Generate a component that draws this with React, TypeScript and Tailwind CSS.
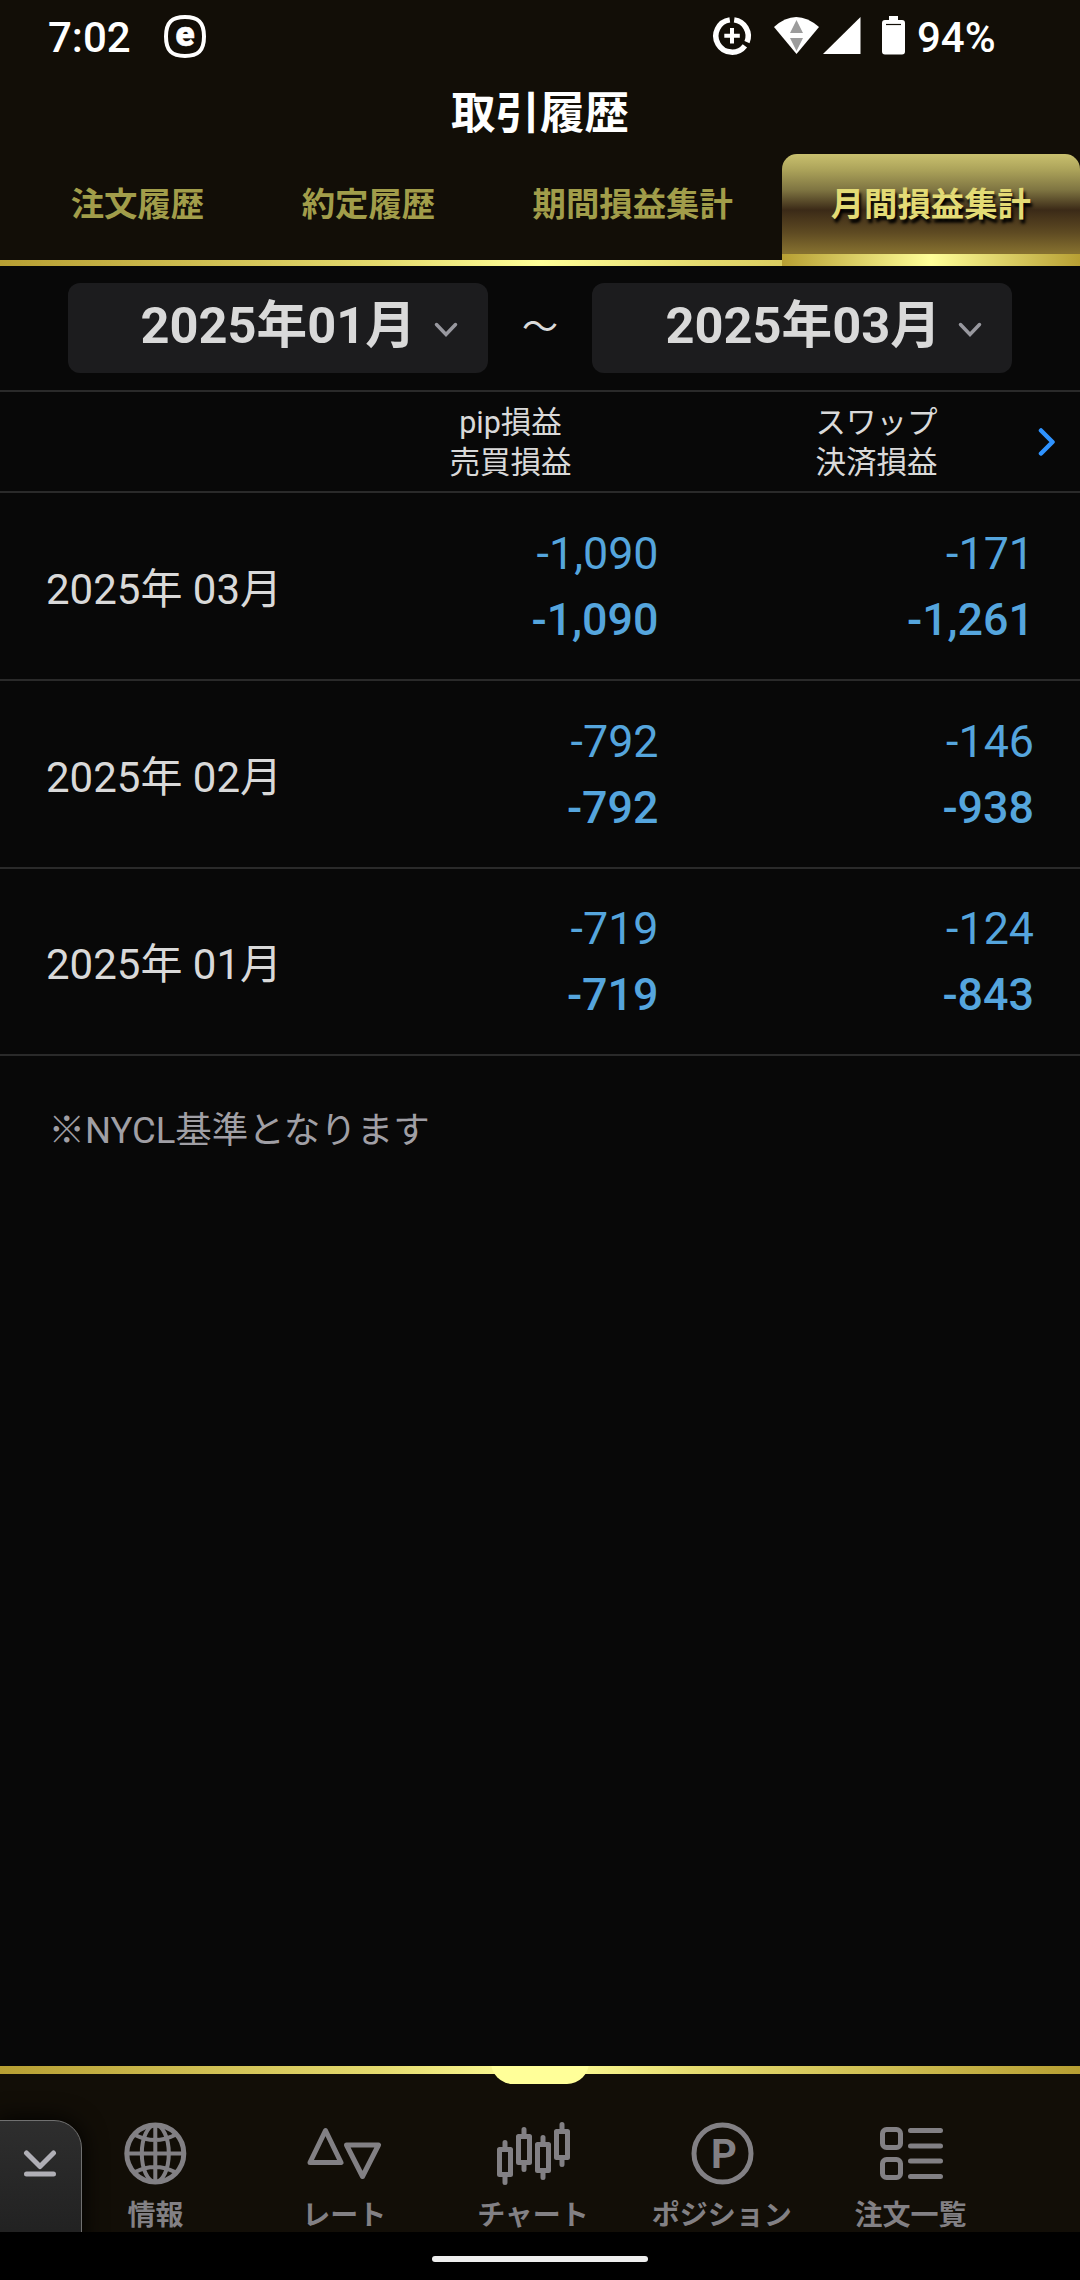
import React from "react";

const GOLD_BAR = "bg-[linear-gradient(90deg,#b79f33_0%,#e4da6e_35%,#ffff99_50%,#e4da6e_65%,#b79f33_100%)]";

function StatusBar() {
  return (
    <div className="flex h-[72px] items-center pl-[48px] text-[42px] leading-[42px] font-medium text-white">
      <span className="mt-[3px] w-[116px]">7:02</span>
      <svg className="h-[44px] w-[44px]" viewBox="0 0 44 44">
        <path d="M21 3C34 3 40 8 40 22.500S34 42 21 42 2 37 2 22.500 8 3 21 3Z" fill="none" stroke="#fff" strokeWidth="4" />
        <text x="21" y="32" textAnchor="middle" fontFamily="Roboto" fontWeight="900" fontSize="35" fill="#fff" stroke="#fff" strokeWidth="0.6">e</text>
      </svg>
      <svg className="ml-[504px] h-[44px] w-[202px]" viewBox="712 14 202 44" fill="#fff">
        <g fill="none" stroke="#fff" strokeWidth="5.500">
          <path d="M734.2 19.900A16.2 16.2 0 0 1 747 42.100" />
          <path d="M744.900 45.800A16.2 16.2 0 1 1 729.800 19.900" />
          <path d="M732 28v15.500M724.300 35.800h15.500" strokeWidth="4" />
        </g>
        <path d="M774 27Q796 7 819 27L796.500 54Z" />
        <path d="M796.500 20l6.500 13h-13ZM796.500 51l6.500-13h-13Z" fill="#9c9c9c" />
        <path d="M860.500 17v37H823Z" />
        <path d="M889 16h9v4h4q3 0 3 3v28.500q0 3-3 3h-17q-3 0-3-3V23q0-3 3-3h4Z" />
        <path d="M886 24.500h15" stroke="#120e07" strokeWidth="1.200" />
      </svg>
      <span className="mt-[3px] ml-[3px]">94%</span>
    </div>
  );
}

function Tabs() {
  const tabs = ["注文履歴", "約定履歴", "期間損益集計"];
  return (
    <div className="relative flex h-[112px] pl-[22px] text-[33.4px] leading-[102px] font-bold whitespace-nowrap">
      <div className={"absolute bottom-0 left-0 h-[6.500px] w-full " + GOLD_BAR} />
      {tabs.map((t) => (
        <div key={t} className="px-[48.700px] text-[#a19d4a]">{t}</div>
      ))}
      <div className="relative flex flex-1 flex-col items-center overflow-hidden rounded-t-[15px] bg-[linear-gradient(180deg,#c9c06e_0%,#aca35a_14%,#7f7542_32%,#3b2a17_50%,#5e4a22_70%,#85702f_88%)] text-[#e3db75] [text-shadow:2px_4px_3px_#000]">
        <span>月間損益集計</span>
        <div className="absolute bottom-0 h-[12.500px] w-full bg-[linear-gradient(90deg,#b79f33,#ffff99_50%,#b79f33)]" />
      </div>
    </div>
  );
}

function MonthSelect({ label }: { label: string }) {
  return (
    <div className="flex h-[90px] w-[420px] items-center rounded-[12px] bg-[#1c1c1e] pl-[73px] text-[50.600px] leading-[50px] font-bold">
      <span className="mb-[4px] w-[293px] whitespace-nowrap">{label}</span>
      <svg className="mt-[4px] h-[16px] w-[24px]" viewBox="0 0 24 16">
        <path d="M2.500 2.500L12 12.500 21.500 2.500" fill="none" stroke="#98989f" strokeWidth="3.500" strokeLinecap="round" />
      </svg>
    </div>
  );
}

const rows = [
  { m: "2025年 03月", a: ["-1,090", "-1,090"], b: ["-171", "-1,261"] },
  { m: "2025年 02月", a: ["-792", "-792"], b: ["-146", "-938"] },
  { m: "2025年 01月", a: ["-719", "-719"], b: ["-124", "-843"] },
];

function Amounts({ v, className }: { v: string[]; className: string }) {
  return (
    <div className={"pt-[2px] text-right text-[44.800px] leading-[66px] text-[#55a5dd] " + className}>
      <div>{v[0]}</div>
      <div className="font-medium">{v[1]}</div>
    </div>
  );
}

function NavItem({ label, children }: { label: string; children: React.ReactNode }) {
  return (
    <div className="flex w-[188.8px] flex-col items-center">
      <svg className="h-[72px] w-[80px]" viewBox="0 0 80 72" fill="none" stroke="#828084" strokeWidth="5" strokeLinecap="round" strokeLinejoin="round">
        {children}
      </svg>
      <span className="mt-[5.500px] text-[28px] leading-[40px] font-bold whitespace-nowrap text-[#828084]">{label}</span>
    </div>
  );
}

function BottomNav() {
  return (
    <div className="relative h-[166px] overflow-hidden bg-[#120e07]">
      <div className={"h-[8px] w-full " + GOLD_BAR} />
      <div className="absolute top-[-20px] left-[491px] h-[38px] w-[98px] rounded-b-[22px] bg-[#ffff99]" />
      <div className="absolute top-[53.500px] left-[-3px] h-[130px] w-[84.500px] rounded-tr-[28px] border border-[#707070] bg-linear-to-b from-[#2e2e2e] to-[#202020] shadow-[0_0_24px_#000]">
        <svg className="mt-[28px] ml-[25px] h-[32px] w-[34px]" viewBox="0 0 34 32" fill="none" stroke="#b0afb6" strokeWidth="5" strokeLinecap="round" strokeLinejoin="round">
          <path d="M3.500 4L17 17.500 30.500 4M3.500 25h27" />
        </svg>
      </div>
      <div className="ml-[61px] flex pt-[44px]">
        <NavItem label="情報">
          <circle cx="40.300" cy="35.500" r="28.500" />
          <g strokeWidth="4">
            <ellipse cx="40.300" cy="35.500" rx="13.500" ry="28.500" />
            <path d="M40.300 8v55M12 35.500h56M20 17Q40 27 60 17M20 54Q40 44 60 54" />
          </g>
        </NavItem>
        <NavItem label="レート">
          <path d="M21.500 12.500L37 44.500h-31ZM58.500 58.500L74.500 27h-32Z" />
        </NavItem>
        <NavItem label="チャート">
          <path d="M12 24.500v6M12 58v6.500M31 11.500v6M31 46v5.500M50 19.500v6M50 54v5.500M69 6.500v6M69 41v5.500M6.500 31.500h11v25h-11ZM25.500 18.500h11v26h-11ZM44.500 26.500h11v26h-11ZM63.500 13.500h11v26h-11Z" />
        </NavItem>
        <NavItem label="ポジション">
          <circle cx="40.500" cy="35.500" r="28.500" />
          <text x="42" y="50" textAnchor="middle" fontFamily="Roboto" fontWeight="700" fontSize="40" fill="#828084" stroke="none">P</text>
        </NavItem>
        <NavItem label="注文一覧">
          <rect x="11.500" y="11.500" width="18" height="18" rx="4" />
          <rect x="11.500" y="41.500" width="18" height="18" rx="4" />
          <path d="M39.500 12.500h30M39.500 28h30M39.500 43h30M39.500 58.500h30" />
        </NavItem>
      </div>
    </div>
  );
}

export default function App() {
  return (
    <div lang="ja" className="flex h-[2280px] w-[1080px] flex-col overflow-hidden bg-[#080808] font-[Roboto,'Noto_Sans_CJK_JP',sans-serif] text-[#d9d9d9]">
      <div className="h-[266px] bg-[#120e07]">
        <StatusBar />
        <h1 className="h-[82px] text-center text-[44.500px] leading-[85px] font-bold text-white">取引履歴</h1>
        <Tabs />
      </div>
      <div className="flex h-[126px] items-center justify-between border-b-2 border-[#2a2a2a] px-[67.500px]">
        <MonthSelect label="2025年01月" />
        <span className="text-[36px]">～</span>
        <MonthSelect label="2025年03月" />
      </div>
      <div className="flex h-[101px] items-center border-b-2 border-[#2a2a2a] text-center text-[30.500px] leading-[40px]">
        <div className="mt-[2px] ml-[365px] w-[291px]">pip損益<br />売買損益</div>
        <div className="mt-[2px] ml-[75px] w-[291px]">スワップ<br />決済損益</div>
        <svg className="mt-[1px] ml-[16px] h-[30px] w-[18px]" viewBox="0 0 18 30">
          <path d="M3 3.500L14.500 15 3 26.500" fill="none" stroke="#2f93ff" strokeWidth="4.500" strokeLinecap="round" strokeLinejoin="round" />
        </svg>
      </div>
      {rows.map((r) => (
        <div key={r.m} className="flex h-[187.800px] items-center border-b-2 border-[#2a2a2a] pl-[46px]">
          <div className="w-[320px] pt-[7px] text-[42px]">{r.m}</div>
          <Amounts v={r.a} className="w-[292.500px]" />
          <Amounts v={r.b} className="w-[375.500px]" />
        </div>
      ))}
      <p className="mt-[47px] ml-[48.500px] text-[36.500px] leading-[56px] text-[#a09fa5]">※NYCL基準となります</p>
      <div className="flex-1" />
      <BottomNav />
      <div className="flex h-[48px] justify-center bg-black pt-[24px]">
        <div className="h-[6px] w-[216px] rounded-full bg-[#eee]" />
      </div>
    </div>
  );
}
